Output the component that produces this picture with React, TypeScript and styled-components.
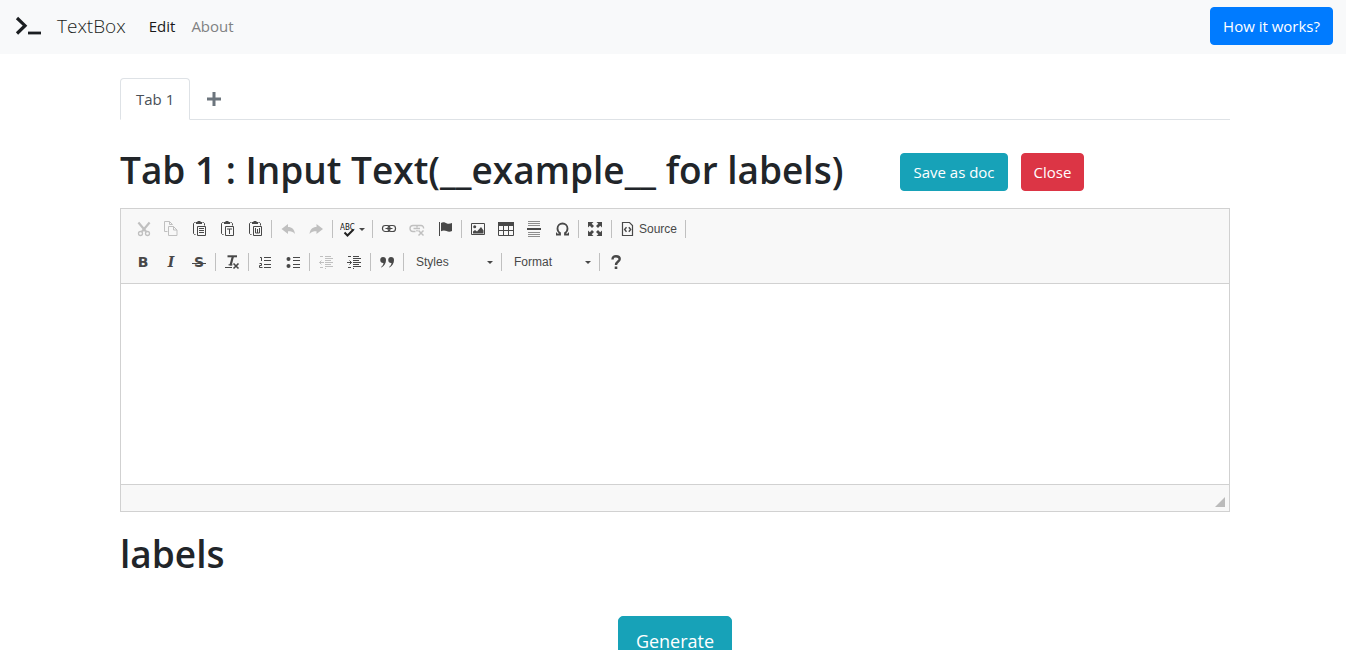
import React from "react";
import styled, { createGlobalStyle, css } from "styled-components";

const GlobalStyle = createGlobalStyle`
  *, *::before, *::after { box-sizing: border-box; }
  body {
    margin: 0;
    background: #fff;
    color: #212529;
    font-family: "Open Sans", "Noto Sans", sans-serif;
    font-size: 15px;
    line-height: 24px;
  }
  button, select, textarea { font-family: inherit; }
`;

const Navbar = styled.nav`
  display: flex;
  align-items: center;
  height: 54px;
  padding: 0 13px 2px 15px;
  background: #f8f9fa;
`;

const Brand = styled.a`
  display: flex;
  align-items: center;
  gap: 15px;
  margin-right: 15px;
  color: #1b1e21;
  font-size: 19px;
  font-weight: 300;
  line-height: 30px;
  text-decoration: none;
`;

const NavLinks = styled.ul`
  display: flex;
  flex: 1;
  margin: 0;
  padding: 0;
  list-style: none;
`;

const NavLink = styled.a<{ $active?: boolean }>`
  padding: 8px;
  color: ${(p) => (p.$active ? "#1a1a1a" : "#808182")};
  text-decoration: none;
`;

const tones = { primary: "#007bff", info: "#17a2b8", danger: "#dc3545" };

const Button = styled.button<{ $tone: keyof typeof tones; $large?: boolean }>`
  border: 1px solid ${(p) => tones[p.$tone]};
  border-radius: 4px;
  background: ${(p) => tones[p.$tone]};
  color: #fff;
  cursor: pointer;
  font-size: 15px;
  line-height: 24px;
  padding: 6px 12px;
  white-space: nowrap;
  ${(p) =>
    p.$large &&
    css`
      border-radius: 5px;
      font-size: 18px;
      line-height: 30px;
      padding: 9px 17px;
    `}
`;

const Main = styled.main`
  padding: 24px 0 0 4px;
`;

const Container = styled.div`
  max-width: 1110px;
  margin: 0 auto;
`;

const Tabs = styled.div`
  display: flex;
  height: 42px;
  border-bottom: 1px solid #dee2e6;
`;

const Tab = styled.button`
  height: 42px;
  padding: 0 15px;
  border: 1px solid #dee2e6;
  border-bottom-color: #fff;
  border-radius: 4px 4px 0 0;
  background: #fff;
  color: #495057;
  cursor: pointer;
  font-size: 15px;
`;

const AddTab = styled.button`
  display: flex;
  align-items: center;
  padding: 0 16px;
  border: 0;
  background: none;
  color: #6c757d;
  cursor: pointer;
`;

const TitleRow = styled.header`
  display: flex;
  align-items: center;
  gap: 13px;
  height: 50px;
  margin: 27px 0 11px;
`;

const Heading = styled.h1`
  margin: 0;
  font-size: 37px;
  font-weight: 600;
  line-height: 48px;
  white-space: nowrap;
`;

const TitleText = styled(Heading)`
  margin-right: 44px;
  padding-bottom: 4px;
`;

const Editor = styled.section`
  border: 1px solid #d1d1d1;
`;

const Toolbar = styled.div`
  display: flex;
  flex-direction: column;
  gap: 5px;
  padding: 6px 8px 7px;
  border-bottom: 1px solid #d1d1d1;
  background: #f8f8f8;
`;

const ToolRow = styled.div`
  display: flex;
`;

const ToolGroup = styled.div`
  display: flex;
  align-items: center;
  &:not(:last-child)::after,
  &[data-closed]::after {
    content: "";
    width: 1px;
    height: 18px;
    margin: 0 2px;
    background: #c0c0c0;
  }
`;

const Tool = styled.button<{ $wide?: boolean }>`
  display: flex;
  align-items: center;
  justify-content: center;
  gap: 3px;
  width: ${(p) => (p.$wide ? "auto" : "28px")};
  height: 28px;
  padding: ${(p) => (p.$wide ? "0 5px" : "0")};
  border: 0;
  background: none;
  color: #484848;
  cursor: pointer;
  font-family: "Liberation Sans", Arial, sans-serif;
  font-size: 12px;
  line-height: 16px;
  &:disabled { color: #c0c0c0; cursor: default; }
`;

const SourceTool = styled(Tool)`
  padding: 0 6px;
`;

const Glyph = styled.span<{ $italic?: boolean; $serif?: boolean; $strike?: boolean }>`
  font-family: ${(p) => (p.$serif ? '"DejaVu Serif", serif' : '"DejaVu Sans", sans-serif')};
  font-size: 14px;
  font-weight: 700;
  font-style: ${(p) => (p.$italic ? "italic" : "normal")};
  ${(p) =>
    p.$strike &&
    css`
      padding: 0 2px;
      background: linear-gradient(currentColor, currentColor) center 9px / 100% 1px no-repeat;
    `}
`;

const Combo = styled.label`
  display: grid;
  align-items: center;
  width: 93px;
  height: 28px;
  color: #484848;
  > * { grid-area: 1 / 1; }
  > svg { justify-self: end; margin-right: 6px; pointer-events: none; }
`;

const Select = styled.select`
  width: 100%;
  height: 28px;
  padding: 0 16px 0 10px;
  appearance: none;
  border: 0;
  background: none;
  color: inherit;
  font-family: "Liberation Sans", Arial, sans-serif;
  font-size: 12px;
`;

const TextArea = styled.textarea`
  display: block;
  width: 100%;
  height: 200px;
  padding: 20px;
  border: 0;
  outline: 0;
  resize: none;
`;

const StatusBar = styled.div`
  display: flex;
  align-items: flex-end;
  justify-content: flex-end;
  height: 27px;
  padding: 4px;
  border-top: 1px solid #d1d1d1;
  background: #f8f8f8;
`;

const Labels = styled.section`
  padding-top: 18px;
`;

const Actions = styled.div`
  display: flex;
  justify-content: center;
  padding-top: 38px;
`;

const Icon = ({ children }: { children: React.ReactNode }) => (
  <svg width="16" height="16" viewBox="0 0 16 16" fill="none" stroke="currentColor" aria-hidden="true">
    {children}
  </svg>
);

const Caret = () => (
  <svg width="6" height="3" viewBox="0 0 6 3" fill="currentColor" aria-hidden="true">
    <path d="M0 0h6L3 3z" />
  </svg>
);

const CutIcon = () => (
  <Icon>
    <path d="M3.4 1.5 11 10.5M14.6 1.5 7 10.5" strokeWidth="2.2" />
    <circle cx="5.5" cy="12.5" r="2" strokeWidth="1.3" />
    <circle cx="12.5" cy="12.5" r="2" strokeWidth="1.3" />
  </Icon>
);

const CopyIcon = () => (
  <Icon>
    <path d="M4.5 10.5h-3V.5h5l3 3M6.5.5v3h3" />
    <path d="M5.500 5.500h5l3.500 3.500v5.500h-8.500zM10.500 5.500v3.500h3.500" />
  </Icon>
);

const PasteIcon = ({ children }: { children: React.ReactNode }) => (
  <Icon>
    <path d="M4.500 1.500h-1l-1 1v10l1 1h1M11.500 1.500h1l1 1v2" />
    <path d="M5 1h1.500V0h3v1H11v2H5z" fill="currentColor" stroke="none" />
    <path d="M6.500 5.500h8v9h-8z" />
    {children}
  </Icon>
);

const UndoIcon = () => (
  <Icon>
    <path d="M1.500 8 8 3v3c4 0 6.500 2.500 7 7-2-2.300-4-2.700-7-2.700V13z" fill="currentColor" stroke="none" />
  </Icon>
);

const RedoIcon = () => (
  <Icon>
    <path d="M15 8 8.500 3v3c-4 0-6.500 2.500-7 7 2-2.300 4-2.700 7-2.700V13z" fill="currentColor" stroke="none" />
  </Icon>
);

const SpellIcon = () => (
  <Icon>
    <text x="0" y="9" fontSize="8" fontFamily="DejaVu Sans Condensed, DejaVu Sans, sans-serif" fill="#111" stroke="none">ABC</text>
    <path d="m4.500 11.500 3 3 6-6" strokeWidth="2" stroke="#222" />
  </Icon>
);

const LinkIcon = () => (
  <Icon>
    <rect x="1.500" y="4.500" width="7.500" height="6" rx="2.800" strokeWidth="1.200" />
    <rect x="7" y="4.500" width="7.500" height="6" rx="2.800" strokeWidth="1.200" />
    <path d="M4.500 7.500h7" />
  </Icon>
);

const UnlinkIcon = () => (
  <Icon>
    <path d="M6.500 10.500H4a2.500 2.500 0 0 1 0-6h8a2.500 2.500 0 0 1 2.500 3M4.500 7.500H11M8 4.500v2M8 9v1.500" strokeWidth="1.400" />
    <path d="m9.500 9.500 5 5M14.500 9.500l-5 5" strokeWidth="1.500" />
  </Icon>
);

const FlagIcon = () => (
  <Icon>
    <path d="M2.500 1v14" />
    <path d="M4 2c2-1.500 4-.5 5.500.3S13 3 15 2v8c-2 1-4 .7-5.500 0S6 9 4 10.300z" fill="currentColor" stroke="none" />
  </Icon>
);

const ImageIcon = () => (
  <Icon>
    <path d="M1.500 2.500h13v11h-13z" />
    <path d="M3 12.500v-2l2-1.500 2 1.500 4-4.500 2.500 3.500v3z" fill="currentColor" stroke="none" />
    <circle cx="4.700" cy="5.700" r="1.500" fill="currentColor" stroke="none" />
  </Icon>
);

const TableIcon = () => (
  <Icon>
    <path d="M.5 2.500h15v12H.5zM5.500 5v9M10.500 5v9M1 9.500h14" />
    <path d="M0 1h16v4H0z" fill="currentColor" stroke="none" />
  </Icon>
);

const RuleIcon = () => (
  <Icon>
    <path d="M2 .5h12M2 2.500h12M2 4.500h12M2 11.500h12M2 13.500h12M2 15.500h12" opacity=".6" />
    <path d="M1 8h14" strokeWidth="2" />
  </Icon>
);

const OmegaIcon = () => (
  <Icon>
    <path d="M2 13.500h4V12c-1.700-1-2.500-2.500-2.500-4.500a5 5 0 0 1 10 0c0 2-.8 3.500-2.500 4.500v1.500h4" strokeWidth="1.800" />
    <path d="M2.500 11.500V14M14.500 11.500V14" />
  </Icon>
);

const MaximizeIcon = () => (
  <Icon>
    <path d="M1 1h5.500L4.700 2.800 7 5 5 7 2.800 4.700 1 6.500zM15 1v5.500l-1.800-1.800L11 7 9 5l2.300-2.200L9.500 1zM1 15V9.500l1.800 1.800L5 9l2 2-2.300 2.200L6.500 15zM15 15H9.500l1.800-1.800L9 11l2-2 2.200 2.300L15 9.500z" fill="currentColor" stroke="none" />
  </Icon>
);

const SourceIcon = () => (
  <Icon>
    <path d="M2.500 1.500h7l3 3v10h-10z" strokeWidth="1.200" />
    <path d="M6.500 6.200 4.600 8.500l1.900 2.300M8.800 6.200l1.900 2.300-1.900 2.300" strokeWidth="1.400" />
  </Icon>
);

const ClearIcon = () => (
  <Icon>
    <path d="M3.500 2.300h9.500" strokeWidth="2" />
    <path d="M9 2 6.500 11.500" strokeWidth="2.200" />
    <path d="M4.500 10.800h4M1 13.500h7" />
    <path d="m9.500 9.500 5 5M14.500 9.500l-5 5" strokeWidth="1.600" />
  </Icon>
);

const NumberedIcon = () => (
  <Icon>
    <path d="M7 3.500h7M7 6.500h7M7 10.500h7M7 13.500h7" />
    <path d="M3 3.500h1.500V7M2.500 9.500h2v2h-2v2h3" />
  </Icon>
);

const BulletedIcon = () => (
  <Icon>
    <circle cx="3.500" cy="5" r="2" fill="currentColor" stroke="none" />
    <circle cx="3.500" cy="12" r="2" fill="currentColor" stroke="none" />
    <path d="M8 3.500h7M8 6.500h7M8 10.500h7M8 13.500h7" />
  </Icon>
);

const IndentIcon = ({ out }: { out?: boolean }) => (
  <Icon>
    <path d="M2 2.500h3M2 13.500h3M8 2.500h5M8 4.500h7M8 6.500h5M8 8.500h7M8 10.500h5M8 12.500h7" />
    <path d="M7.500 2v13" strokeDasharray="1 1" />
    <path d={out ? "M6 8.500H1.500M3.500 6.500l-2 2 2 2" : "M1 8.500h4.500M3.500 6.500l2 2-2 2"} />
  </Icon>
);

const QuoteIcon = () => (
  <Icon>
    <path d="M4 3a3 3 0 0 1 3 3c0 3-1.500 6-4.500 7.500L2 13c1.500-1 2.300-2.300 2.500-4A3 3 0 1 1 4 3zM12 3a3 3 0 0 1 3 3c0 3-1.500 6-4.500 7.500L10 13c1.500-1 2.300-2.300 2.500-4A3 3 0 1 1 12 3z" fill="currentColor" stroke="none" />
  </Icon>
);

const HelpIcon = () => (
  <Icon>
    <path d="M4.500 5.500C4.500 3 6 2.200 8 2.200s3.700 1 3.700 2.800C11.700 7.500 8 7.500 8 11" strokeWidth="2.400" />
    <path d="M6.700 12.500h2.600V15H6.700z" fill="currentColor" stroke="none" />
  </Icon>
);

const StyleCombo = ({ name }: { name: string }) => (
  <ToolGroup>
    <Combo>
      <Select aria-label={name} defaultValue={name}>
        <option>{name}</option>
      </Select>
      <Caret />
    </Combo>
  </ToolGroup>
);

export default function App() {
  return (
    <>
      <GlobalStyle />
      <Navbar>
        <Brand href="#">
          <svg width="27" height="20" viewBox="0 0 27 20" fill="none" stroke="currentColor" aria-hidden="true">
            <path d="m2 2 8 7.700L2 17.500" strokeWidth="3.200" />
            <path d="M13 17h13" strokeWidth="2.800" />
          </svg>
          TextBox
        </Brand>
        <NavLinks>
          <li><NavLink href="#edit" $active>Edit</NavLink></li>
          <li><NavLink href="#about">About</NavLink></li>
        </NavLinks>
        <Button $tone="primary">How it works?</Button>
      </Navbar>
      <Main>
        <Container>
          <Tabs role="tablist">
            <Tab role="tab" aria-selected="true">Tab 1</Tab>
            <AddTab aria-label="Add tab">
              <svg width="16" height="16" viewBox="0 0 16 16" stroke="currentColor" strokeWidth="3" aria-hidden="true">
                <path d="M8 1v14M1 8h14" />
              </svg>
            </AddTab>
          </Tabs>
          <TitleRow>
            <TitleText>Tab 1 : Input Text(__example__ for labels)</TitleText>
            <Button $tone="info">Save as doc</Button>
            <Button $tone="danger">Close</Button>
          </TitleRow>
          <Editor aria-label="Editor">
            <Toolbar role="toolbar">
              <ToolRow>
                <ToolGroup>
                  <Tool disabled aria-label="Cut"><CutIcon /></Tool>
                  <Tool disabled aria-label="Copy"><CopyIcon /></Tool>
                  <Tool aria-label="Paste">
                    <PasteIcon><path d="M8 7.500h5M8 9.500h5M8 11.500h5" /></PasteIcon>
                  </Tool>
                  <Tool aria-label="Paste as plain text">
                    <PasteIcon><path d="M8 8h5M10.500 8v5" /></PasteIcon>
                  </Tool>
                  <Tool aria-label="Paste from Word">
                    <PasteIcon><path d="M8.500 7v5h4V7M10.500 8v4" /></PasteIcon>
                  </Tool>
                </ToolGroup>
                <ToolGroup>
                  <Tool disabled aria-label="Undo"><UndoIcon /></Tool>
                  <Tool disabled aria-label="Redo"><RedoIcon /></Tool>
                </ToolGroup>
                <ToolGroup>
                  <Tool $wide aria-label="Spell check"><SpellIcon /><Caret /></Tool>
                </ToolGroup>
                <ToolGroup>
                  <Tool aria-label="Link"><LinkIcon /></Tool>
                  <Tool disabled aria-label="Unlink"><UnlinkIcon /></Tool>
                  <Tool aria-label="Anchor"><FlagIcon /></Tool>
                </ToolGroup>
                <ToolGroup>
                  <Tool aria-label="Image"><ImageIcon /></Tool>
                  <Tool aria-label="Table"><TableIcon /></Tool>
                  <Tool aria-label="Horizontal line"><RuleIcon /></Tool>
                  <Tool aria-label="Special character"><OmegaIcon /></Tool>
                </ToolGroup>
                <ToolGroup>
                  <Tool aria-label="Maximize"><MaximizeIcon /></Tool>
                </ToolGroup>
                <ToolGroup data-closed>
                  <SourceTool $wide><SourceIcon />Source</SourceTool>
                </ToolGroup>
              </ToolRow>
              <ToolRow>
                <ToolGroup>
                  <Tool aria-label="Bold"><Glyph>B</Glyph></Tool>
                  <Tool aria-label="Italic"><Glyph $italic $serif>I</Glyph></Tool>
                  <Tool aria-label="Strikethrough"><Glyph $strike>S</Glyph></Tool>
                </ToolGroup>
                <ToolGroup>
                  <Tool aria-label="Remove format"><ClearIcon /></Tool>
                </ToolGroup>
                <ToolGroup>
                  <Tool aria-label="Numbered list"><NumberedIcon /></Tool>
                  <Tool aria-label="Bulleted list"><BulletedIcon /></Tool>
                </ToolGroup>
                <ToolGroup>
                  <Tool disabled aria-label="Decrease indent"><IndentIcon out /></Tool>
                  <Tool aria-label="Increase indent"><IndentIcon /></Tool>
                </ToolGroup>
                <ToolGroup>
                  <Tool aria-label="Block quote"><QuoteIcon /></Tool>
                </ToolGroup>
                <StyleCombo name="Styles" />
                <StyleCombo name="Format" />
                <ToolGroup>
                  <Tool aria-label="About the editor"><HelpIcon /></Tool>
                </ToolGroup>
              </ToolRow>
            </Toolbar>
            <TextArea aria-label="Input text" />
            <StatusBar>
              <svg width="10" height="10" viewBox="0 0 10 10" fill="#bbb" aria-hidden="true">
                <path d="M10 0v10H0z" />
              </svg>
            </StatusBar>
          </Editor>
          <Labels>
            <Heading as="h2">labels</Heading>
          </Labels>
          <Actions>
            <Button $tone="info" $large>Generate</Button>
          </Actions>
        </Container>
      </Main>
    </>
  );
}
